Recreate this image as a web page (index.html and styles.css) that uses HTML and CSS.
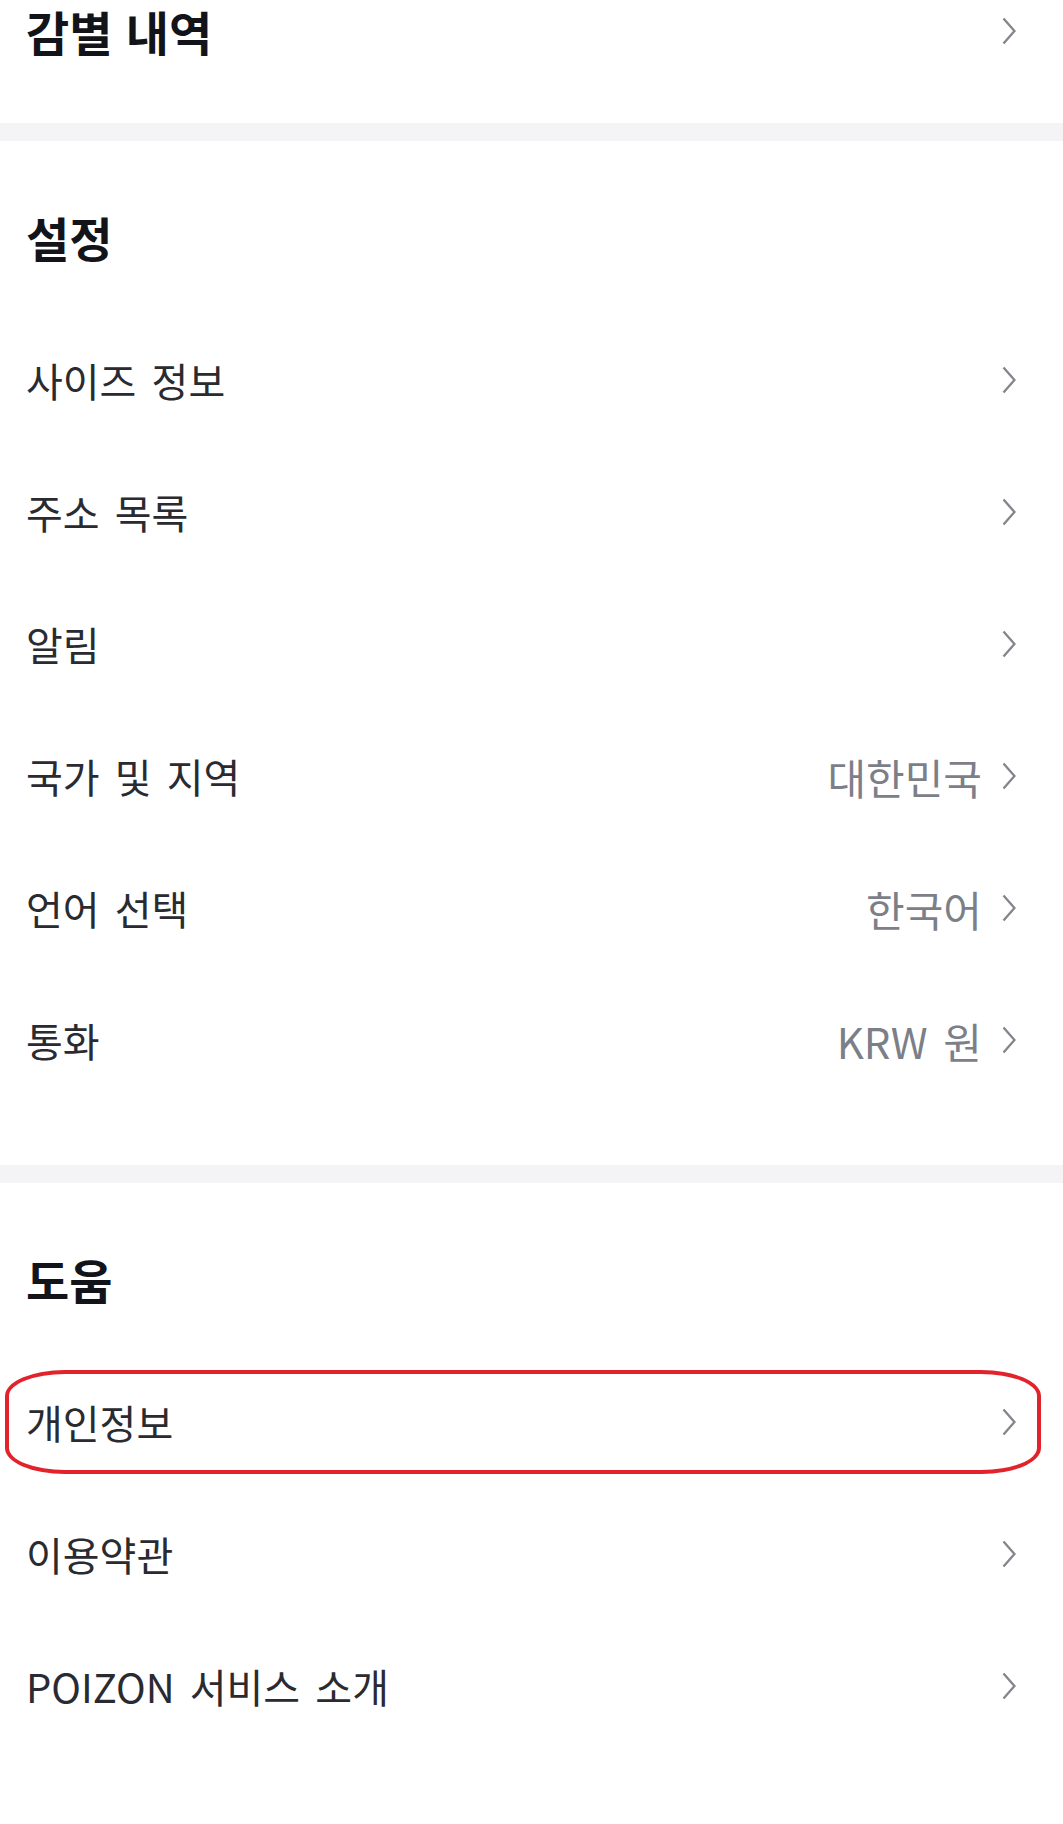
FILE: index.html
```html
<!DOCTYPE html>
<html lang="ko">
<head>
    <meta charset="UTF-8">
    <title>설정</title>
    <link rel="stylesheet" href="styles.css">
</head>
<body>
<div class="page">
    <section class="group groupTop">
        <a class="row rowBig" href="javascript:;">
            <span class="label">감별 내역</span>
            <svg class="arrow" viewBox="0 0 14 28"><path d="M1.5 1.5 L12.5 14 L1.5 26.5"/></svg>
        </a>
    </section>

    <!-- 설정 -->
    <section class="group">
        <h2 class="groupTitle">설정</h2>
        <ul class="list">
            <li class="row"><span class="label">사이즈 정보</span><svg class="arrow" viewBox="0 0 14 28"><path d="M1.5 1.5 L12.5 14 L1.5 26.5"/></svg></li>
            <li class="row"><span class="label">주소 목록</span><svg class="arrow" viewBox="0 0 14 28"><path d="M1.5 1.5 L12.5 14 L1.5 26.5"/></svg></li>
            <li class="row"><span class="label">알림</span><svg class="arrow" viewBox="0 0 14 28"><path d="M1.5 1.5 L12.5 14 L1.5 26.5"/></svg></li>
            <li class="row"><span class="label">국가 및 지역</span><span class="value">대한민국</span><svg class="arrow" viewBox="0 0 14 28"><path d="M1.5 1.5 L12.5 14 L1.5 26.5"/></svg></li>
            <li class="row"><span class="label">언어 선택</span><span class="value">한국어</span><svg class="arrow" viewBox="0 0 14 28"><path d="M1.5 1.5 L12.5 14 L1.5 26.5"/></svg></li>
            <li class="row"><span class="label">통화</span><span class="value">KRW 원</span><svg class="arrow" viewBox="0 0 14 28"><path d="M1.5 1.5 L12.5 14 L1.5 26.5"/></svg></li>
        </ul>
    </section>

    <!-- 도움 -->
    <section class="group groupLast">
        <h2 class="groupTitle">도움</h2>
        <ul class="list">
            <li class="row marked"><span class="label">개인정보</span><svg class="arrow" viewBox="0 0 14 28"><path d="M1.5 1.5 L12.5 14 L1.5 26.5"/></svg></li>
            <li class="row"><span class="label">이용약관</span><svg class="arrow" viewBox="0 0 14 28"><path d="M1.5 1.5 L12.5 14 L1.5 26.5"/></svg></li>
            <li class="row"><span class="label">POIZON 서비스 소개</span><svg class="arrow" viewBox="0 0 14 28"><path d="M1.5 1.5 L12.5 14 L1.5 26.5"/></svg></li>
        </ul>
    </section>
</div>
</body>
</html>
```

FILE: styles.css
```css
* {
    list-style: none;
    padding: 0;
    margin: 0;
    box-sizing: border-box;
}

body {
    background: #fff;
    font-family: "Noto Sans CJK KR", "Noto Sans", sans-serif;
    color: #2a2b31;
}

.page {
    width: 1063px;
    height: 1824px;
    overflow: hidden;
    background: #f4f4f7;
    display: flex;
    flex-direction: column;
    gap: 18px;
}

.group {
    background: #fff;
    padding: 38px 0 59px;
}

.groupTop {
    height: 123px;
    padding: 0;
}

.groupLast {
    flex: 1;
}

.groupTitle {
    height: 114px;
    margin-bottom: 21px;
    padding: 0 26px;
    display: flex;
    align-items: center;
    font-size: 47px;
    font-weight: 700;
    color: #131419;
}

.row {
    position: relative;
    height: 132px;
    padding: 0 47px 0 26px;
    display: flex;
    align-items: center;
    font-size: 40px;
    word-spacing: 4px;
    color: #2a2b31;
    text-decoration: none;
}

.rowBig {
    height: 62px;
    font-size: 47px;
    line-height: 1.1;
    font-weight: 700;
    word-spacing: 0;
    color: #131419;
}

.label {
    flex: 1;
    white-space: nowrap;
}

.value {
    color: #7d7f88;
    margin-right: 20px;
    font-size: 42px;
    word-spacing: 4px;
}

.arrow {
    width: 14px;
    height: 28px;
    fill: none;
    stroke: #85868d;
    stroke-width: 2.4;
}

/* 红圈标记 */
.marked::after {
    content: "";
    position: absolute;
    left: 5px;
    right: 22px;
    top: 14px;
    height: 96px;
    border: 4px solid #e2232b;
    border-radius: 60px / 26px;
}
```
